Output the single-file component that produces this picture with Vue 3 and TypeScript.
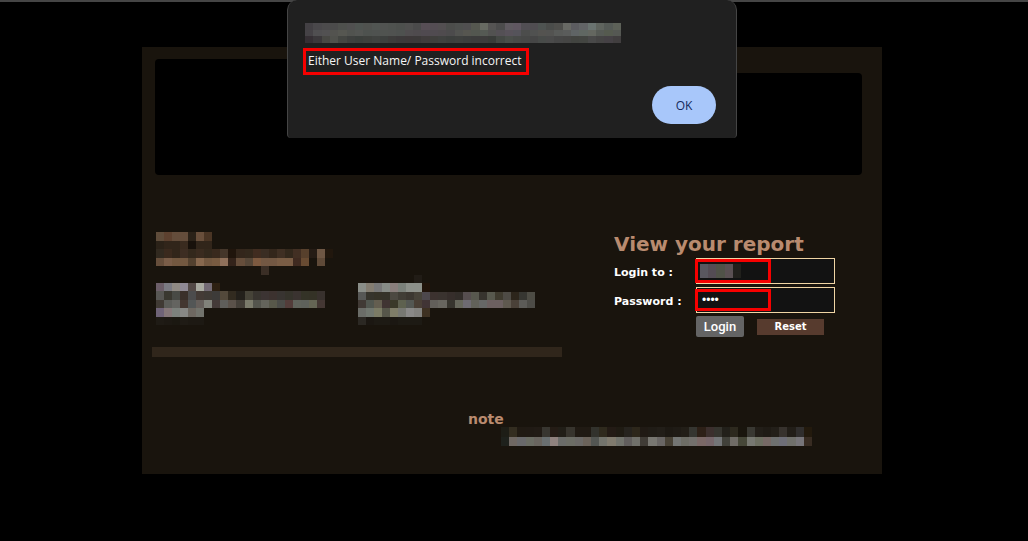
<script setup lang="ts">
import { ref } from 'vue'

interface Mosaic {
  columns: number
  rows: string[]
}

interface Cell {
  x: number
  y: number
  fill: string
}

const mosaics: Record<string, Mosaic> = {
  origin: {
    columns: 38,
    rows: [
      '434044 4a484b 4c4b4c 4b4b4b 4e504d 505050 4f5451 50524f 515552 515351 4f524f 4d504d 50504f 4b4b4b 574e55 544d53 534f51 4c4d4b 4e504e 504f50 55574f 676a62 555453 4c4c4c 5f5a60 605761 514e53 504d51 4e5351 4a4c4a 4f4f4c 686964 5c5c60 626466 6a7370 5f645e 555a56 5d6158',
      '454246 504f51 525152 53534f 565751 51534f 535552 4e524f 4f5250 505350 505250 4e514f 504d4f 4f4b4e 504a50 504b50 4f4b4e 4c4b4c 525350 565650 535750 555a54 525251 545055 58525a 55535a 4c4d4c 505150 545350 535351 585a58 5a5c5b 5f6465 606762 646760 565a55 555a4f 555853',
      '352f34 3b383b 484844 50514c 444642 3e403e 3b3f3c 3e403d 404240 3d403e 3d3c3b 3c393a 3d3839 3c3939 403c3c 3f3f3c 3f413f 3c3f3d 3e403e 3c3e3d 3c3c3c 3d3c3c 393c39 444844 4a4e4a 484a48 474847 464646 484b49 4a4a4a 464646 454544 424440 434541 494949 454444 454145 413e3f',
    ],
  },
  heading: {
    columns: 22,
    rows: [
      '5f4c3a 5d412f 644d3b 644d3b 2b2218 694f3b 4a3524',
      '2b2218 31251a 31251a 3a2b1f 18110b 31251a 31251a',
      '31291f 3a291d 31251a 3d2d22 33281c 3a2b1f 33281c 39291d 44362a 20150c 33261b 33281c 402c20 3a2d23 33261b 3f2f23 33281c 422f23 57402c 251c15 6e5744 21170d',
      '664e3b 7a5d48 735840 735840 53412f 87684e 735840 785b41 8f705a 33231a 664e3b 564738 7d5a40 735843 735843 7a5d45 7a5d45 3f2a20 684b32 - 5f4a38',
      '- - - - - - - - - - - - - 3a2e25',
    ],
  },
  left: {
    columns: 21,
    rows: [
      '6c5e68 7b7b82 908a83 908a95 544a47 a9aaa0 736a74 2d2012',
      '575653 3a3830 484a45 3a302b 4c4c4d 443b36 403b36 3d3b39 53493b 322b20 23201b 464338 38342f 3c3433 3c322f 383431 35332b 3a3330 343327 343226 38312d',
      '403a34 5b5c58 646460 443731 535656 665f5b 81827a 443a38 5f5e5a 5b524a 443f38 7b7b6b 54554d 64645b 58584a 4b4c48 533d3a 60635b 5e615b 656554 443733',
      '6f6377 857778 7c817c 888885 6e6861 72736c',
      '1f1b15 1d1913 1b1811 1f1b15 1d1913 1d1913',
    ],
  },
  right: {
    columns: 22,
    rows: [
      '- - - - - - - 211c16',
      '8a8e88 847d71 787878 878c86 8a7f7c 7b817a 8d918a 8d918a 21140a',
      '575856 36342c 363328 353329 4c4941 413e36 3c3831 474339 4d484c 3c322f 3a332f 362e2b 322d29 564e4f 58584e 37342e 58594e 3f3b2f 4e4b45 2c251b 363631 4d4c44',
      '413a35 525750 645e50 403433 3a3929 5e614f 545753 4a3f36 413435 625f5a 68665f 37352e 66675b 6e6b72 62625a 666766 6c6060 6c6060 5f594f 4a4138 5c5b57 4d4c47',
      '6b6d68 71776f 7b7b65 56564a 7f7d68 777872 8a8988 83827f 3e3122',
      '2b2823 1b1712 1d1a14 1d1a14 1b1712 1d1a14 1d1a14 1d1a14',
    ],
  },
  note: {
    columns: 38,
    rows: [
      '1d1d16 332d20 201a13 201a14 211b15 383630 241c15 211e17 37342d 201a13 201a13 32322c 2f2a1d 231b15 1f1b13 26231e 2d271b 201a14 201c16 221e18 1d1913 1f1b15 221e17 353530 2d2017 3b2f2d 35342e 22201a 2d291e 19150d 393832 221e18 1f1b15 231f19 37322d 221e18 302e2d 231a0d',
      '1e211c 6f6863 69696b 6a6c63 69655f 696f70 8f827e 6b6c69 6c6d65 6b6966 6b635a 535652 73746c 807b6e 71736c 615e5d 70706a 403c36 787771 696664 484236 737573 6d6d65 73706c 7a6866 76666a 737577 41413a 706c66 464738 777871 6d6f61 766965 6e706f 6e6e77 70706b 777579 382c22',
    ],
  },
  user: {
    columns: 5,
    rows: ['59575f 544c54 505248 5a5053 21201c'],
  },
}

function cellsOf(mosaic: Mosaic): Cell[] {
  return mosaic.rows.flatMap((row, y) =>
    row
      .split(' ')
      .map((color, x) => ({ x, y, fill: `#${color}` }))
      .filter((cell) => cell.fill !== '#-'),
  )
}

const drawn = Object.fromEntries(
  Object.entries(mosaics).map(([name, mosaic]) => [
    name,
    { viewBox: `0 0 ${mosaic.columns} ${mosaic.rows.length}`, cells: cellsOf(mosaic) },
  ]),
)

const userName = ref('')
const password = ref('abcd')
const dialogOpen = ref(true)

function reset(): void {
  userName.value = ''
  password.value = ''
}
</script>

<template>
  <div class="page">
    <main class="panel">
      <div class="banner">
        <div class="banner-start"></div>
        <div class="banner-end"></div>
      </div>

      <div class="content">
        <section class="intro">
          <svg class="mosaic mosaic-heading" :viewBox="drawn.heading.viewBox" preserveAspectRatio="none" aria-hidden="true">
            <rect v-for="(c, i) in drawn.heading.cells" :key="i" :x="c.x" :y="c.y" width="1" height="1" :fill="c.fill" />
          </svg>
          <div class="links">
            <svg class="mosaic mosaic-left" :viewBox="drawn.left.viewBox" preserveAspectRatio="none" aria-hidden="true">
              <rect v-for="(c, i) in drawn.left.cells" :key="i" :x="c.x" :y="c.y" width="1" height="1" :fill="c.fill" />
            </svg>
            <svg class="mosaic mosaic-right" :viewBox="drawn.right.viewBox" preserveAspectRatio="none" aria-hidden="true">
              <rect v-for="(c, i) in drawn.right.cells" :key="i" :x="c.x" :y="c.y" width="1" height="1" :fill="c.fill" />
            </svg>
          </div>
          <div class="bar"></div>
        </section>

        <form class="login" @submit.prevent="dialogOpen = true">
          <h1>View your report</h1>
          <div class="fields">
            <label for="user">Login to :</label>
            <div class="field">
              <input id="user" v-model="userName" type="text" autocomplete="off" />
              <span class="mark">
                <svg class="mosaic mosaic-user" :viewBox="drawn.user.viewBox" preserveAspectRatio="none" aria-hidden="true">
                  <rect v-for="(c, i) in drawn.user.cells" :key="i" :x="c.x" :y="c.y" width="1" height="1" :fill="c.fill" />
                </svg>
              </span>
            </div>
            <label for="password">Password :</label>
            <div class="field">
              <input id="password" v-model="password" type="password" autocomplete="off" />
              <span class="mark mark-low"></span>
            </div>
            <div class="actions">
              <button class="submit" type="submit">Login</button>
              <button class="reset" type="button" @click="reset">Reset</button>
            </div>
          </div>
        </form>
      </div>

      <div class="note">
        <h2>note</h2>
        <svg class="mosaic mosaic-note" :viewBox="drawn.note.viewBox" preserveAspectRatio="none" aria-hidden="true">
          <rect v-for="(c, i) in drawn.note.cells" :key="i" :x="c.x" :y="c.y" width="1" height="1" :fill="c.fill" />
        </svg>
      </div>
    </main>

    <div v-if="dialogOpen" class="dialog" role="alertdialog" aria-describedby="message">
      <svg class="mosaic mosaic-origin" :viewBox="drawn.origin.viewBox" preserveAspectRatio="none" aria-hidden="true">
        <rect v-for="(c, i) in drawn.origin.cells" :key="i" :x="c.x" :y="c.y" width="1" height="1" :fill="c.fill" />
      </svg>
      <p id="message">Either User Name/ Password incorrect</p>
      <button class="ok" type="button" @click="dialogOpen = false">OK</button>
    </div>
  </div>
</template>

<style>
body {
  margin: 0;
  background: #000;
}
</style>

<style scoped>
.page {
  position: relative;
  box-sizing: border-box;
  min-height: 100vh;
  padding: 45px 4px 0 0;
  border-top: 2px solid #454545;
  background: #000;
  color: #fff;
  font-family: Verdana, 'DejaVu Sans', sans-serif;
}

.panel {
  box-sizing: border-box;
  max-width: 740px;
  margin: 0 auto;
  padding: 12px 20px 28px 10px;
  background: #19140d;
}

.banner {
  display: flex;
  align-items: flex-end;
  margin-left: 3px;
}

.banner-start,
.banner-end {
  flex: 1;
  background: #000;
}

.banner-start {
  height: 116px;
  border-radius: 4px 0 0 4px;
}

.banner-end {
  height: 102px;
  border-radius: 0 4px 4px 0;
}

.content {
  display: flex;
  justify-content: space-between;
  padding-right: 27px;
}

.intro {
  width: 410px;
  padding-top: 57px;
}

.mosaic {
  display: block;
  shape-rendering: crispEdges;
}

.mosaic-heading {
  width: 177px;
  height: 43px;
  margin-left: 4px;
}

.links {
  display: flex;
  align-items: flex-end;
  gap: 33px;
  padding-left: 4px;
}

.mosaic-left {
  width: 169px;
  height: 42px;
}

.mosaic-right {
  width: 177px;
  height: 50px;
}

.bar {
  height: 10px;
  margin-top: 22px;
  background: #30261b;
}

.login {
  width: 221px;
  padding-top: 57px;
}

h1,
h2 {
  margin: 0;
  color: #b98b6f;
  font-weight: bold;
}

h1 {
  font-size: 20px;
  line-height: 24px;
  white-space: nowrap;
}

.fields {
  display: grid;
  grid-template-columns: 82px 1fr;
  row-gap: 3px;
  align-items: center;
  padding-top: 2px;
}

label {
  padding-top: 2px;
  font-size: 11px;
  font-weight: bold;
}

.field {
  position: relative;
}

.field input {
  display: block;
  box-sizing: border-box;
  width: 100%;
  height: 26px;
  padding: 0 5px;
  border: 1px solid #f0d5a4;
  border-radius: 0;
  outline: none;
  background: #121212;
  color: #fff;
  font: bold 11px Verdana, 'DejaVu Sans', sans-serif;
}

.field input[type='password'] {
  font: 12px 'Liberation Sans', Arial, sans-serif;
}

.mark {
  position: absolute;
  top: 1px;
  left: -1px;
  box-sizing: border-box;
  width: 76px;
  height: 24px;
  padding: 2px;
  border: 3px solid #f60000;
  pointer-events: none;
}

.mark-low {
  top: 2px;
  height: 22px;
}

.mosaic-user {
  width: 41px;
  height: 14px;
}

.actions {
  display: flex;
  grid-column: 2;
  align-items: center;
  gap: 13px;
}

button {
  padding: 0;
  border: 0;
  cursor: pointer;
}

.submit {
  width: 48px;
  height: 21px;
  border-radius: 2px;
  background: #646464;
  color: #fff;
  font: 500 13px/21px Roboto, Arial, sans-serif;
}

.reset {
  width: 67px;
  height: 16px;
  background: #573b2e;
  color: #fff;
  font: bold 10px/16px Verdana, 'DejaVu Sans', sans-serif;
}

.note {
  display: flex;
  align-items: flex-start;
  justify-content: flex-end;
  padding: 53px 50px 0 0;
}

h2 {
  width: 33px;
  font-size: 14px;
  line-height: 18px;
  white-space: nowrap;
}

.mosaic-note {
  width: 311px;
  height: 19px;
  margin-top: 17px;
}

.dialog {
  position: absolute;
  top: -2px;
  right: 4px;
  left: 0;
  box-sizing: border-box;
  width: 450px;
  margin: 0 auto;
  padding: 23px 20px 14px 15px;
  border: solid #454545;
  border-width: 0 1px;
  border-radius: 10px 10px 4px 4px;
  background: #202020;
  font-family: 'Segoe UI', 'Open Sans', sans-serif;
}

.mosaic-origin {
  width: 316px;
  height: 20px;
  margin-left: 2px;
}

p {
  box-sizing: border-box;
  width: max-content;
  margin: 5px 0 11px;
  padding: 0 4px 1px 2px;
  border: 3px solid #f60000;
  color: #f4f4f4;
  font-size: 12px;
  line-height: 20px;
}

.ok {
  display: block;
  width: 64px;
  height: 38px;
  margin-left: auto;
  border-radius: 19px;
  background: #a8c7fa;
  color: #142a5c;
  font: 500 12px 'Segoe UI', 'Open Sans', sans-serif;
}
</style>
